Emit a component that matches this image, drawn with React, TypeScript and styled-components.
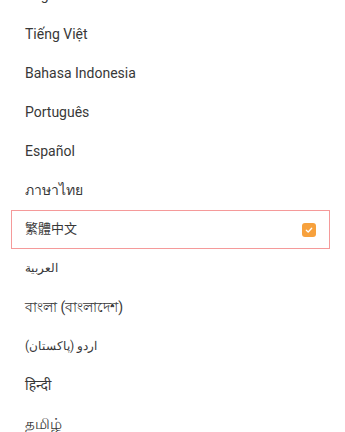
import React, {FC} from 'react';
import styled, {createGlobalStyle} from 'styled-components';

const GlobalStyle = createGlobalStyle`
  html, body {
    margin: 0;
    padding: 0;
    background: #ffffff;
  }
  body {
    font-family: Roboto, "Noto Sans", "Noto Sans CJK TC", sans-serif;
    overflow: hidden;
  }
`;

const Page = styled.div`
  width: 345px;
  height: 432px;
  overflow: hidden;
  background: #ffffff;
`;

const List = styled.ul`
  list-style: none;
  margin: -24px 0 0 0;
  padding: 0 15px 0 11px;
`;

const Row = styled.li<{ $selected?: boolean }>`
  box-sizing: border-box;
  display: flex;
  align-items: center;
  justify-content: space-between;
  height: 39px;
  padding: 0 13px 2px 13px;
  border: 1px solid ${p => (p.$selected ? '#f59a9a' : 'transparent')};
  color: #383838;
`;

const Label = styled.span<{ $size: number }>`
  font-size: ${p => p.$size}px;
  line-height: 20px;
`;

const Check = styled.span`
  display: flex;
  align-items: center;
  justify-content: center;
  width: 14px;
  height: 14px;
  border-radius: 3px;
  background: #f7a13d;
  margin-top: 2px;
`;

const languages: { name: string; size: number }[] = [
    {name: 'English', size: 14},
    {name: 'Tiếng Việt', size: 14},
    {name: 'Bahasa Indonesia', size: 14},
    {name: 'Português', size: 14},
    {name: 'Español', size: 14},
    {name: 'ภาษาไทย', size: 14},
    {name: '繁體中文', size: 13},
    {name: 'العربية', size: 12},
    {name: 'বাংলা (বাংলাদেশ)', size: 14},
    {name: 'اردو (پاکستان)', size: 12},
    {name: 'हिन्दी', size: 14},
    {name: 'தமிழ்', size: 15},
];

const selected = '繁體中文';

const CheckMark: FC = () => (
    <Check>
        <svg width="8" height="8" viewBox="0 0 8 8" fill="none">
            <path d="M1.3 4.2 L3.2 6 L6.7 2.2" stroke="#ffffff" strokeWidth="1.3" strokeLinecap="round" strokeLinejoin="round"/>
        </svg>
    </Check>
);

const App: FC = () => {
    return (
        <Page>
            <GlobalStyle/>
            <List>
                {languages.map(lang => (
                    <Row key={lang.name} $selected={lang.name === selected}>
                        <Label $size={lang.size}>{lang.name}</Label>
                        {lang.name === selected && <CheckMark/>}
                    </Row>
                ))}
            </List>
        </Page>
    );
};

export default App;
